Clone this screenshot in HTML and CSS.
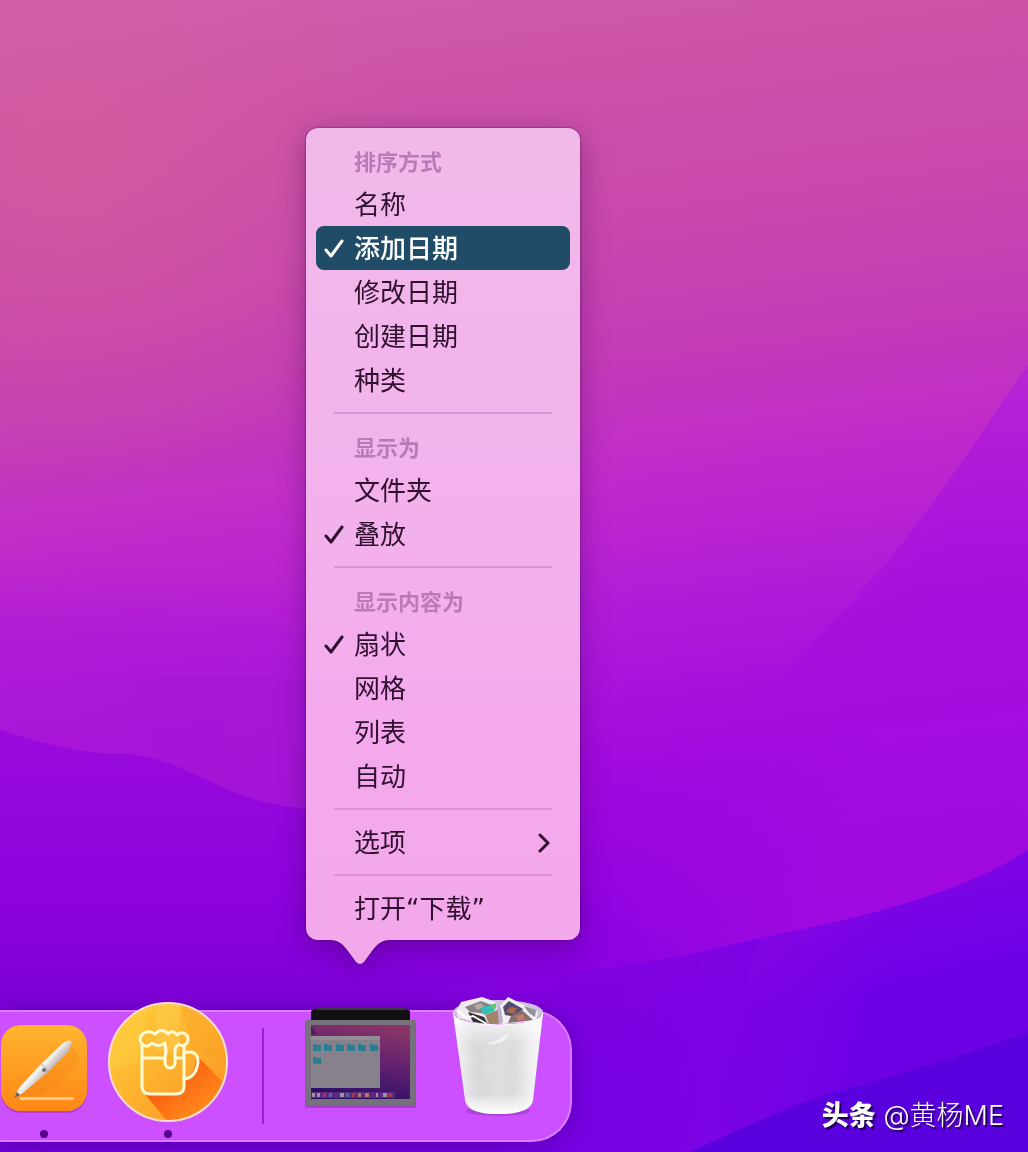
FILE: index.html
```html
<!DOCTYPE html>
<html lang="zh-CN">
<head>
    <meta charset="UTF-8">
    <meta name="viewport" content="width=device-width, initial-scale=1.0">
    <title>程序坞</title>
    <link rel="stylesheet" href="styles.css">
</head>
<body>
    <!-- wallpaper -->
    <svg class="wallpaper" viewBox="0 0 1028 1152" preserveAspectRatio="none" aria-hidden="true">
        <defs>
            <linearGradient id="sky" x1="0" y1="0" x2=".12" y2="1">
                <stop offset="0" stop-color="#d15eae"/>
                <stop offset=".12" stop-color="#cd53a8"/>
                <stop offset=".27" stop-color="#c847ad"/>
                <stop offset=".38" stop-color="#c43ab8"/>
                <stop offset=".48" stop-color="#c02acb"/>
                <stop offset=".6" stop-color="#b01ad8"/>
                <stop offset=".72" stop-color="#a20ade"/>
                <stop offset=".84" stop-color="#9002e2"/>
                <stop offset="1" stop-color="#7400e8"/>
            </linearGradient>
            <radialGradient id="glow" gradientUnits="userSpaceOnUse" cx="70" cy="170" r="330">
                <stop offset="0" stop-color="#d66294" stop-opacity=".5"/>
                <stop offset="1" stop-color="#d66294" stop-opacity="0"/>
            </radialGradient>
            <linearGradient id="ridge" gradientUnits="userSpaceOnUse" x1="690" y1="500" x2="930" y2="580">
                <stop offset="0" stop-color="#a40cde" stop-opacity="0"/>
                <stop offset="1" stop-color="#a40cde" stop-opacity=".8"/>
            </linearGradient>
            <linearGradient id="ridgelight" gradientUnits="userSpaceOnUse" x1="0" y1="360" x2="0" y2="620">
                <stop offset="0" stop-color="#c030d0" stop-opacity=".65"/>
                <stop offset="1" stop-color="#b01ada" stop-opacity="0"/>
            </linearGradient>
            <linearGradient id="band" x1="0" y1="0" x2="1" y2="0">
                <stop offset="0" stop-color="#a416d6" stop-opacity=".1"/>
                <stop offset=".5" stop-color="#a416d6" stop-opacity=".8"/>
                <stop offset="1" stop-color="#a416d6" stop-opacity="0"/>
            </linearGradient>
            <linearGradient id="wave" gradientUnits="userSpaceOnUse" x1="0" y1="730" x2="0" y2="1100">
                <stop offset="0" stop-color="#9a0adc"/>
                <stop offset=".5" stop-color="#8a02dc"/>
                <stop offset="1" stop-color="#7000d4"/>
            </linearGradient>
            <linearGradient id="fade" gradientUnits="userSpaceOnUse" x1="400" y1="0" x2="700" y2="0">
                <stop offset="0" stop-color="#fff"/>
                <stop offset="1" stop-color="#000"/>
            </linearGradient>
            <mask id="wavemask"><rect width="1028" height="1152" fill="url(#fade)"/></mask>
            <linearGradient id="hill" gradientUnits="userSpaceOnUse" x1="560" y1="980" x2="860" y2="1050">
                <stop offset="0" stop-color="#6e00e6" stop-opacity=".2"/>
                <stop offset="1" stop-color="#6e00e6"/>
            </linearGradient>
            <linearGradient id="edge" gradientUnits="userSpaceOnUse" x1="900" y1="900" x2="920" y2="980">
                <stop offset="0" stop-color="#8a08e4" stop-opacity=".5"/>
                <stop offset="1" stop-color="#8a08e4" stop-opacity="0"/>
            </linearGradient>
            <filter id="soft" x="-10%" y="-10%" width="120%" height="120%">
                <feGaussianBlur stdDeviation="18"/>
            </filter>
        </defs>
        <rect width="1028" height="1152" fill="url(#sky)"/>
        <rect width="1028" height="1152" fill="url(#glow)"/>
        <path d="M-60 590C110 600 210 605 330 640L460 720V900H-60Z" fill="#a816d8" opacity=".4" filter="url(#soft)"/>
        <path d="M0 690C110 676 210 676 330 680L500 700V900H0Z" fill="url(#band)"/>
        <path d="M1028 366C985 425 940 500 880 570C790 670 700 760 560 830V1152H1028Z" fill="url(#ridge)"/>
        <path d="M1028 366C985 425 940 500 880 570L830 620H1028Z" fill="url(#ridgelight)"/>
        <path d="M0 730C50 746 85 754 125 754C190 758 220 802 306 809C400 820 520 860 700 960V1152H0Z" fill="url(#wave)" mask="url(#wavemask)"/>
        <path d="M1028 850C960 895 860 918 760 938C690 955 640 965 560 975V1152H1028Z" fill="url(#hill)"/>
        <path d="M1028 850C960 895 860 918 760 938L740 1000H1028Z" fill="url(#edge)"/>
        <path d="M1028 1032C960 1055 900 1075 850 1088C790 1104 740 1130 690 1152H1028Z" fill="#5a00de"/>
    </svg>

    <main class="desktop">
        <nav class="dock" aria-label="程序坞">
            <button class="dock-item running" type="button" aria-label="Pages">
                <svg width="88" height="98" viewBox="0 0 88 98">
                    <defs>
                        <linearGradient id="pages" x1="0" y1="0" x2="0" y2="1">
                            <stop offset="0" stop-color="#feb42e"/>
                            <stop offset="1" stop-color="#fe8716"/>
                        </linearGradient>
                        <linearGradient id="pen" gradientUnits="userSpaceOnUse" x1="36" y1="38" x2="47" y2="48">
                            <stop offset="0" stop-color="#fff"/>
                            <stop offset=".55" stop-color="#f2eff0"/>
                            <stop offset="1" stop-color="#c9bdb9"/>
                        </linearGradient>
                    </defs>
                    <rect x="1" y="2" width="86" height="87" rx="20" fill="#8c2c9c" opacity=".45"/>
                    <rect x="1" y="1" width="86" height="86" rx="20" fill="url(#pages)"/>
                    <path d="M17 72L70 19L80 34L60 60L40 72Z" fill="#e86d0a" opacity=".18"/>
                    <rect x="20" y="73" width="54" height="3" rx="1" fill="#ffc98c"/>
                    <path d="M14 74L19 64L41 40L62 20Q68 15 71 17Q73 20 68 28L48 48L23 69Z" fill="url(#pen)"/>
                    <path d="M41 40Q46 42 48 48" fill="none" stroke="#b9aeb0" stroke-width="1"/>
                    <circle cx="44" cy="46" r="2" fill="#75706f"/>
                    <path d="M14 74L17 68L20 71Z" fill="#665c60"/>
                </svg>
            </button>

            <button class="dock-item running" type="button" aria-label="啤酒">
                <svg width="120" height="120" viewBox="0 0 120 120">
                    <defs>
                        <linearGradient id="beer" x1="0" y1="0" x2="1" y2="1">
                            <stop offset="0" stop-color="#ffcf3c"/>
                            <stop offset=".5" stop-color="#fdb22e"/>
                            <stop offset="1" stop-color="#fb8f20"/>
                        </linearGradient>
                        <linearGradient id="cast" gradientUnits="userSpaceOnUse" x1="70" y1="70" x2="100" y2="105">
                            <stop offset="0" stop-color="#fb6010"/>
                            <stop offset="1" stop-color="#ff8a1c"/>
                        </linearGradient>
                        <clipPath id="coin"><circle cx="60" cy="60" r="58"/></clipPath>
                    </defs>
                    <circle cx="60" cy="60" r="59" fill="url(#beer)"/>
                    <g clip-path="url(#coin)">
                        <path d="M0 0H40L30 60L0 70Z" fill="#ffd84a" opacity=".3"/>
                        <path d="M48 0H72V50H48Z" fill="#ffd45c" opacity=".35"/>
                        <path d="M72 0H120V60L86 52Z" fill="#f9a024" opacity=".35"/>
                        <path d="M88 53L120 85V120H60L36 91L76 91L78 76Q88 72 88 53Z" fill="url(#cast)"/>
                    </g>
                    <circle cx="60" cy="60" r="59" fill="none" stroke="#ffdccf" stroke-width="2"/>
                    <g fill="none" stroke="#fffbd6" stroke-width="3" stroke-linejoin="round" stroke-linecap="round">
                        <path d="M34 44V84Q34 92 42 92H68Q76 92 76 84V44"/>
                        <path d="M34 56H57M67 56H76"/>
                        <path d="M76 51Q90 47 90 60Q88 76 76 77"/>
                        <path d="M57 43Q59 49 57 55V61Q58 66 62 66Q66 66 67 61V49Q67 44 71 42Q75 46 79 41Q82 35 77 32Q73 29 69 33Q65 27 60 32Q54 25 47 32Q42 28 36 31Q29 36 34 42Q39 47 44 41Q50 46 57 41"/>
                    </g>
                </svg>
            </button>

            <span class="dock-divider"></span>

            <div class="dock-slot">
                <button class="dock-item" type="button" aria-label="下载" aria-haspopup="menu" aria-expanded="true">
                    <svg width="124" height="120" viewBox="0 0 124 120">
                        <defs>
                            <linearGradient id="shot" x1=".7" y1="0" x2=".4" y2="1">
                                <stop offset="0" stop-color="#8a3567"/>
                                <stop offset=".5" stop-color="#602070"/>
                                <stop offset="1" stop-color="#291065"/>
                            </linearGradient>
                        </defs>
                        <path d="M19 6H107L112 9V19H13V9Z" fill="#111014"/>
                        <path d="M19 6H107L109 8H17Z" fill="#443348"/>
                        <rect x="7" y="20" width="111" height="86" rx="1" fill="#5a2270" opacity=".35"/>
                        <rect x="8" y="18" width="109" height="85" fill="#77717b"/>
                        <rect x="13" y="23" width="99" height="74" fill="url(#shot)"/>
                        <path d="M13 24L19 32H13Z" fill="#48205e"/>
                        <rect x="13" y="34" width="69" height="52" fill="#86818b"/>
                        <rect x="13" y="34" width="69" height="4" fill="#938d96"/>
                        <g fill="#2b7d94">
                            <path d="M15 42h3l1 1h4v6h-8zM26 42h3l1 1h4v6h-8zM38 42h3l1 1h4v6h-8zM49 42h3l1 1h4v6h-8zM60 42h3l1 1h4v6h-8zM72 42h3l1 1h4v6h-8zM15 55h3l1 1h4v6h-8z"/>
                        </g>
                        <rect x="13" y="90" width="84" height="6" fill="#5c297e"/>
                        <g>
                            <path d="M14 91h3v4h-3zM19 91h3v4h-3zM42 91h4v4h-4zM78 91h2v4h-2zM85 91h4v4h-4z" fill="#9b92a8"/>
                            <path d="M25 91h3v4h-3zM54 91h3v4h-3zM90 91h4v4h-4z" fill="#a13853"/>
                            <path d="M31 91h3v4h-3zM48 91h3v4h-3z" fill="#4a6da1"/>
                            <path d="M60 91h3v4h-3zM67 91h4v4h-4z" fill="#af7964"/>
                        </g>
                    </svg>
                </button>

                <div class="menu" role="menu" aria-label="下载">
                    <h2 class="menu-title">排序方式</h2>
                    <button class="menu-item" type="button" role="menuitemradio" aria-checked="false"><span class="label">名称</span></button>
                    <button class="menu-item active" type="button" role="menuitemradio" aria-checked="true">
                        <svg class="check" viewBox="0 0 20 20"><path d="M2 11L7 17L18 2"/></svg>
                        <span class="label">添加日期</span>
                    </button>
                    <button class="menu-item" type="button" role="menuitemradio" aria-checked="false"><span class="label">修改日期</span></button>
                    <button class="menu-item" type="button" role="menuitemradio" aria-checked="false"><span class="label">创建日期</span></button>
                    <button class="menu-item" type="button" role="menuitemradio" aria-checked="false"><span class="label">种类</span></button>
                    <hr class="menu-line">

                    <h2 class="menu-title">显示为</h2>
                    <button class="menu-item" type="button" role="menuitemradio" aria-checked="false"><span class="label">文件夹</span></button>
                    <button class="menu-item" type="button" role="menuitemradio" aria-checked="true">
                        <svg class="check" viewBox="0 0 20 20"><path d="M2 11L7 17L18 2"/></svg>
                        <span class="label">叠放</span>
                    </button>
                    <hr class="menu-line">

                    <h2 class="menu-title">显示内容为</h2>
                    <button class="menu-item" type="button" role="menuitemradio" aria-checked="true">
                        <svg class="check" viewBox="0 0 20 20"><path d="M2 11L7 17L18 2"/></svg>
                        <span class="label">扇状</span>
                    </button>
                    <button class="menu-item" type="button" role="menuitemradio" aria-checked="false"><span class="label">网格</span></button>
                    <button class="menu-item" type="button" role="menuitemradio" aria-checked="false"><span class="label">列表</span></button>
                    <button class="menu-item" type="button" role="menuitemradio" aria-checked="false"><span class="label">自动</span></button>
                    <hr class="menu-line">

                    <button class="menu-item" type="button" role="menuitem" aria-haspopup="menu">
                        <span class="label">选项</span>
                        <svg class="chevron" viewBox="0 0 12 20"><path d="M2 2L10 10L2 18"/></svg>
                    </button>
                    <hr class="menu-line">

                    <button class="menu-item" type="button" role="menuitem"><span class="label">打开“下载”</span></button>
                    <svg class="menu-tail" viewBox="0 0 60 26"><path d="M0 0C10 0 14 6 18 11L26 22Q30 26 34 22L42 11C46 6 50 0 60 0Z"/></svg>
                </div>
            </div>

            <button class="dock-item" type="button" aria-label="废纸篓">
                <svg width="112" height="126" viewBox="0 0 112 126">
                    <defs>
                        <linearGradient id="bin" x1="0" y1="0" x2="1" y2="0">
                            <stop offset="0" stop-color="#f4f3f5"/>
                            <stop offset=".25" stop-color="#dddce0"/>
                            <stop offset=".65" stop-color="#dedddf"/>
                            <stop offset="1" stop-color="#fafafa"/>
                        </linearGradient>
                        <linearGradient id="binlight" x1="0" y1="0" x2="0" y2="1">
                            <stop offset="0" stop-color="#fff" stop-opacity=".8"/>
                            <stop offset=".3" stop-color="#fff" stop-opacity="0"/>
                            <stop offset=".8" stop-color="#fff" stop-opacity="0"/>
                            <stop offset="1" stop-color="#fff"/>
                        </linearGradient>
                        <filter id="crease"><feGaussianBlur stdDeviation="4"/></filter>
                    </defs>
                    <ellipse cx="56" cy="115" rx="32" ry="5" fill="#8430a8" opacity=".45"/>
                    <ellipse cx="56" cy="16" rx="45" ry="12" fill="#cfc2df"/>
                    <path d="M15 14L19 6L40 1L54 6L56 28L34 27L16 22Z" fill="#eeeaf0"/>
                    <path d="M23 11L39 5L52 10L46 18L28 16Z" fill="#8a8082"/>
                    <path d="M32 9L39 7L44 12L35 14Z" fill="#b5a8a5"/>
                    <path d="M38 12L51 8L53 15L42 19Z" fill="#35bfb2"/>
                    <path d="M49 9L54 7L54 13L50 12Z" fill="#67c75c"/>
                    <path d="M26 16L42 21L46 28L31 26Z" fill="#322f35"/>
                    <path d="M43 19L56 14L57 28L47 28Z" fill="#a4846c"/>
                    <path d="M58 10L66 1L88 12L96 16L94 25L60 28Z" fill="#f1eef2"/>
                    <path d="M61 11L67 5L81 13L75 21L63 19Z" fill="#534c6c"/>
                    <path d="M68 11L75 12L72 18L64 16Z" fill="#a8674c"/>
                    <path d="M69 20L80 14L91 24L66 27Z" fill="#83716f"/>
                    <path d="M74 20L81 18L83 23L76 25Z" fill="#c57b68"/>
                    <path d="M82 10L94 14L93 21L87 17Z" fill="#8f9297"/>
                    <path d="M56 8L59 13L61 26L57 28Z" fill="#bfaec8"/>
                    <path d="M15 14L24 22L31 20L45 28" fill="none" stroke="#fff" stroke-width="2"/>
                    <path d="M11 17Q13 28 56 29Q99 28 101 17L91 104Q89 118 56 118Q25 118 23 104Z" fill="url(#bin)"/>
                    <path d="M26 44L40 58L34 76L46 92L36 104M80 42L70 60L78 82L68 100" fill="none" stroke="#b8b7bb" stroke-width="6" opacity=".2" filter="url(#crease)"/>
                    <path d="M11 17Q13 28 56 29Q99 28 101 17L91 104Q89 118 56 118Q25 118 23 104Z" fill="url(#binlight)"/>
                    <path d="M45 48Q62 42 67 36Q66 49 45 48Z" fill="#fff" opacity=".6"/>
                    <path d="M11 17Q13 28 56 29Q99 28 101 17" fill="none" stroke="#fff" stroke-width="1"/>
                </svg>
            </button>
        </nav>

        <p class="credit"><strong>头条</strong> @黄杨ME</p>
    </main>
</body>
</html>
```

FILE: styles.css
```css
* {
    box-sizing: border-box;
}
body {
    margin: 0;
    font-family: "DejaVu Sans", "Noto Sans CJK SC", sans-serif;
    background-color: #9806de;
}
button {
    border: 0;
    padding: 0;
    background: none;
    font: inherit;
    color: inherit;
}
svg {
    display: block;
}

.wallpaper {
    position: fixed;
    inset: 0;
    width: 100%;
    height: 100%;
    z-index: -1;
}
.desktop {
    min-height: 100vh;
    display: flex;
    align-items: flex-end;
    justify-content: space-between;
    padding-bottom: 10px;
}

/* dock */
.dock {
    display: flex;
    align-items: flex-end;
    gap: 20px;
    height: 132px;
    padding: 0 16px 2px 0;
    border: 2px solid #db7cff;
    border-left: 0;
    border-radius: 0 40px 40px 0;
    background-color: #cc50ff;
    box-shadow: 0 0 20px rgba(50, 0, 110, 0.4);
}
.dock-item {
    display: block;
    position: relative;
    padding-bottom: 16px;
}
.running::after {
    content: "";
    position: absolute;
    bottom: 0;
    left: 50%;
    width: 8px;
    height: 8px;
    margin-left: -4px;
    border-radius: 50%;
    background-color: #55008c;
}
.dock-divider {
    width: 2px;
    height: 96px;
    margin: 0 14px 14px;
    background-color: #9a20c8;
}
.dock-slot {
    position: relative;
}

/* popup menu */
.menu {
    position: absolute;
    left: 8px;
    bottom: 198px;
    width: 274px;
    padding: 10px;
    border-radius: 12px;
    background: linear-gradient(#f1b9ea, #f3b1ec 50%, #f4a9ed 75%, #f3a8ec);
    color: #30102f;
    filter: drop-shadow(0 0 1px rgba(50, 0, 60, 0.6)) drop-shadow(0 6px 14px rgba(40, 0, 70, 0.35));
}
.menu-title {
    margin: 0;
    padding: 6px 0 0 38px;
    font-size: 22px;
    line-height: 38px;
    font-weight: 700;
    color: #ba7ab8;
}
.menu-item {
    display: grid;
    grid-template-columns: 30px 1fr 12px;
    align-items: center;
    width: 100%;
    height: 44px;
    padding: 2px 20px 0 8px;
    border-radius: 8px;
    font-size: 26px;
    line-height: 42px;
    text-align: left;
}
.menu-item .label {
    grid-column: 2;
}
.active {
    background-color: #214c67;
    color: #fff;
    font-weight: 500;
}
.menu-line {
    height: 2px;
    margin: 10px 18px;
    border: 0;
    background-color: #d894d4;
}
.check {
    width: 20px;
    height: 20px;
}
.chevron {
    width: 12px;
    height: 20px;
}
.check path,
.chevron path {
    fill: none;
    stroke: currentColor;
    stroke-width: 3;
    stroke-linecap: round;
    stroke-linejoin: round;
}
.menu-tail {
    position: absolute;
    top: 100%;
    left: 24px;
    width: 60px;
    height: 26px;
    fill: #f3a8ec;
}

.credit {
    margin: 0 24px 6px 0;
    font-family: Inter, "Noto Sans CJK SC", sans-serif;
    font-size: 27px;
    line-height: 40px;
    font-weight: 300;
    color: #fff;
    text-shadow: 2px 2px 1px #1c0050;
}
.credit strong {
    font-weight: 900;
}
```
